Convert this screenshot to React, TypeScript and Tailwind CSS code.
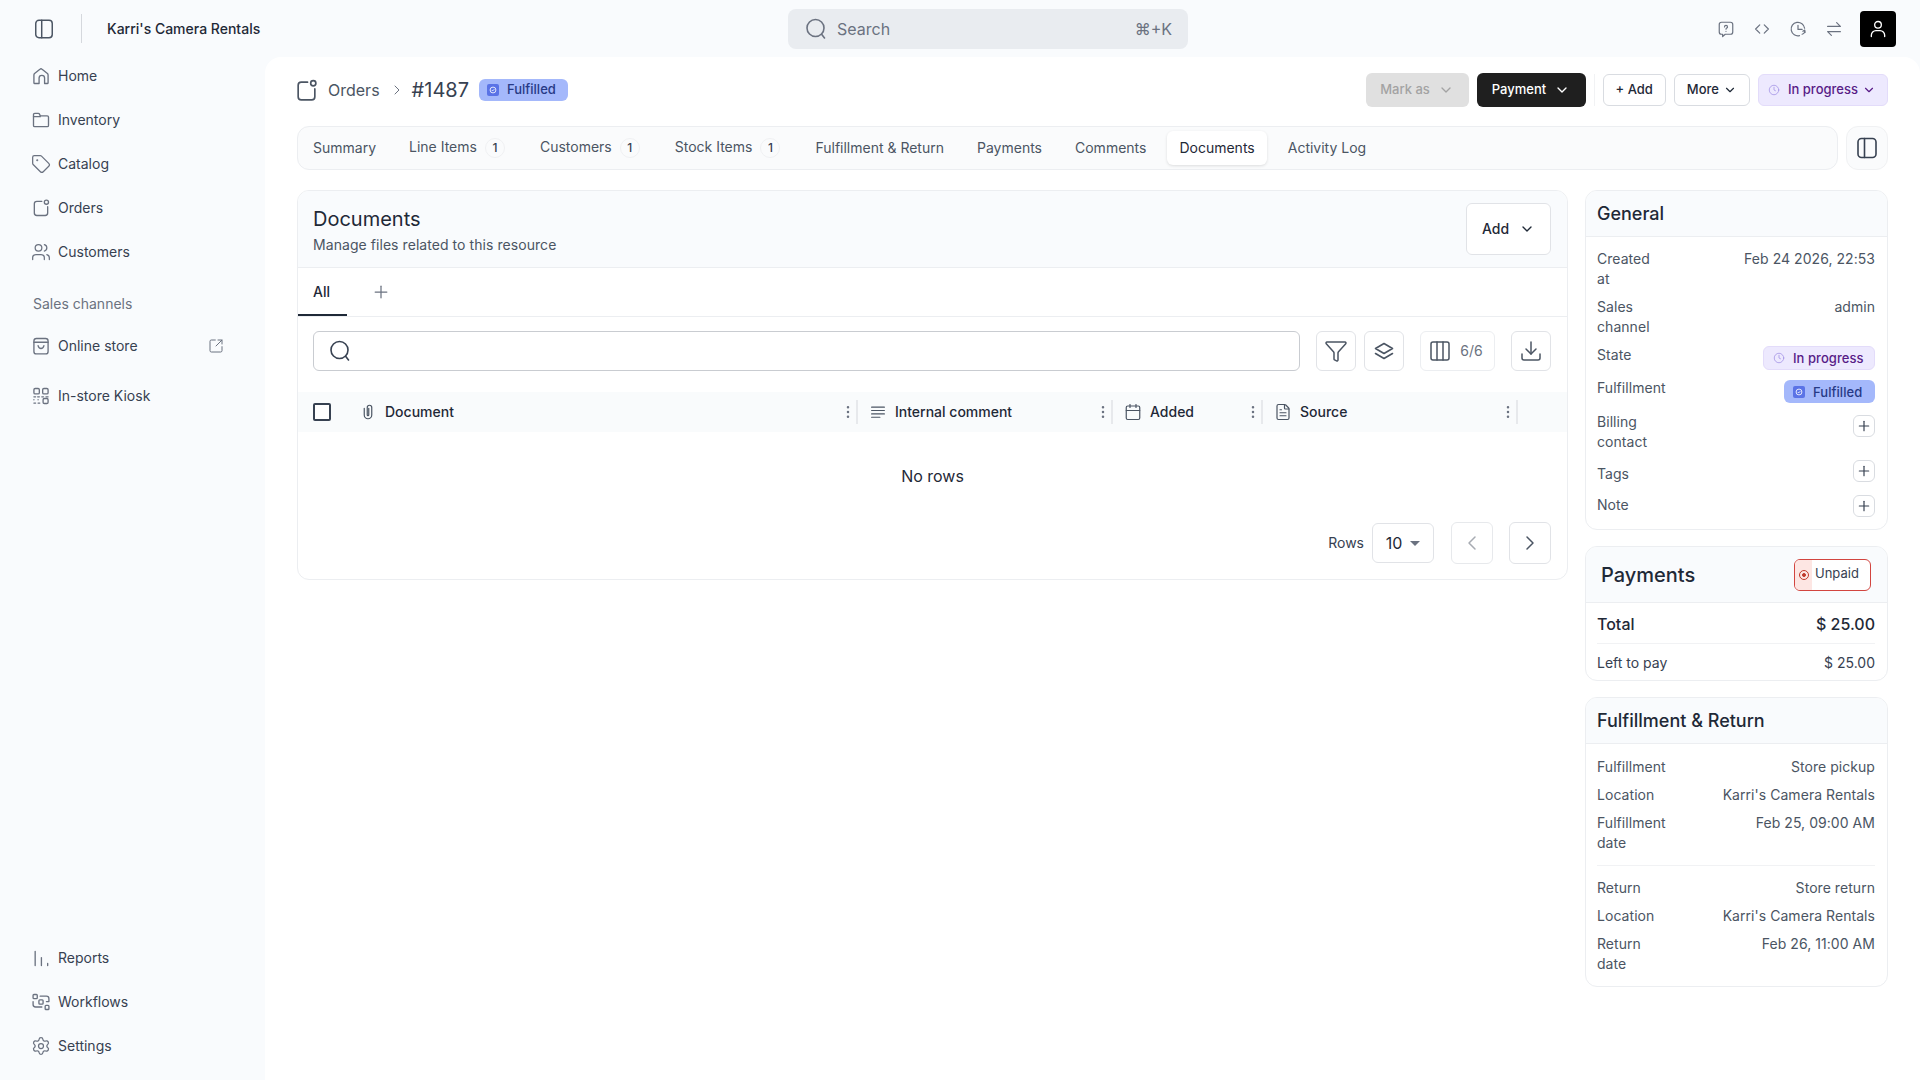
import type { ReactNode } from "react";
import {
  Calendar,
  ChevronDown,
  ChevronLeft,
  ChevronRight,
  Columns3,
  Download,
  EllipsisVertical,
  FileText,
  Funnel,
  Plus,
  Settings,
  SquareArrowOutUpRight,
  Tag,
  Users,
} from "lucide-react";

type IconProps = { className?: string };

function Svg({ className, children }: IconProps & { children: ReactNode }) {
  return (
    <svg
      viewBox="0 0 24 24"
      fill="none"
      stroke="currentColor"
      strokeWidth="1.6"
      strokeLinecap="round"
      strokeLinejoin="round"
      className={className}
    >
      {children}
    </svg>
  );
}

const PanelIcon = ({ className }: IconProps) => (
  <Svg className={className}>
    <rect x="3" y="2.5" width="18" height="19" rx="3.5" />
    <path d="M9.5 2.5v19" />
  </Svg>
);
const SearchIcon = ({ className }: IconProps) => (
  <Svg className={className}>
    <circle cx="11.5" cy="11" r="8.5" />
    <path d="M17.8 17.5 20.5 21" />
  </Svg>
);
const HomeIcon = ({ className }: IconProps) => (
  <Svg className={className}>
    <path d="M3.5 20v-9.2c0-.7.3-1.3.8-1.7l6.4-5.2a2 2 0 0 1 2.6 0l6.4 5.2c.5.4.8 1 .8 1.7V20a1 1 0 0 1-1 1h-3.2v-6.5a3.300 3.300 0 0 0-6.600 0V21H4.500a1 1 0 0 1-1-1z" />
  </Svg>
);
const FolderIcon = ({ className }: IconProps) => (
  <Svg className={className}>
    <path d="M3 8V5.500A1.500 1.500 0 0 1 4.500 4h4.300c.5 0 1 .3 1.200.7L11.200 7H19.500A1.500 1.500 0 0 1 21 8.500v10a1.500 1.500 0 0 1-1.500 1.500h-15A1.500 1.500 0 0 1 3 18.500z" />
    <path d="M3 8h8.200" />
  </Svg>
);
const OrdersIcon = ({ className }: IconProps) => (
  <Svg className={className}>
    <path d="M13 4H7a3 3 0 0 0-3 3v11a3 3 0 0 0 3 3h10a3 3 0 0 0 3-3v-7.500" />
    <circle cx="18.500" cy="5" r="2.500" />
  </Svg>
);
const BagIcon = ({ className }: IconProps) => (
  <Svg className={className}>
    <rect x="3.500" y="3" width="17" height="18.500" rx="3" />
    <path d="M3.500 7.500h17" />
    <path d="M8.500 11.500c.5 2.300 1.800 3.500 3.500 3.500s3-1.200 3.500-3.500" />
  </Svg>
);
const KioskIcon = ({ className }: IconProps) => (
  <Svg className={className}>
    <rect x="3.500" y="3" width="6.500" height="6.500" rx="1.500" />
    <rect x="14" y="3" width="6.500" height="6.500" rx="1.500" />
    <rect x="14.500" y="15" width="6" height="6" rx="1.500" />
    <path d="M3.500 13h2M8 13h2M13 13h2M18 13h2.500M3.500 16.500v0M3.500 20.500h2M8.500 16.500v0M8.500 20.500h2" />
  </Svg>
);
const ReportsIcon = ({ className }: IconProps) => (
  <Svg className={className}>
    <path d="M5 4v17M12.500 11.500V21M20 18.500V21" />
  </Svg>
);
const WorkflowsIcon = ({ className }: IconProps) => (
  <Svg className={className}>
    <rect x="2.500" y="3" width="5" height="5" rx="1" />
    <rect x="9.500" y="9.500" width="5" height="5" rx="1" />
    <rect x="17" y="16" width="4.500" height="5" rx="1" />
    <path d="M11 5h7.500a3 3 0 0 1 3 3v3.500h-3M2.500 11.500v3.500a3 3 0 0 0 3 3H13" />
  </Svg>
);
const HelpIcon = ({ className }: IconProps) => (
  <Svg className={className}>
    <path d="M6 3h12a3 3 0 0 1 3 3v10a3 3 0 0 1-3 3h-7l-3.500 3v-3H6a3 3 0 0 1-3-3V6a3 3 0 0 1 3-3z" />
    <path d="M10 9.200c0-1.100.9-1.900 2-1.900s2 .8 2 1.900c0 1.700-2 1.500-2 3.100M12 15.100v0" />
  </Svg>
);
const CodeIcon = ({ className }: IconProps) => (
  <Svg className={className}>
    <path d="M9 6.500 3.500 12 9 17.500M15 6.500l5.500 5.500-5.500 5.500" />
  </Svg>
);
const HistoryIcon = ({ className }: IconProps) => (
  <Svg className={className}>
    <path d="M20.800 11A9 9 0 1 0 14 20.800" />
    <path d="M12 7v5.500h5.500M21 13.500a5 5 0 0 1-3.500 5.500M21.500 16.500 21 13.500 18.500 15" />
  </Svg>
);
const SwapIcon = ({ className }: IconProps) => (
  <Svg className={className}>
    <path d="M3.500 8.500h17L15.500 3.500M20.500 15.500h-17l5 5" />
  </Svg>
);
const UserIcon = ({ className }: IconProps) => (
  <Svg className={className}>
    <circle cx="12" cy="7" r="4" />
    <path d="M4 21v-1.500A5.500 5.500 0 0 1 9.500 14h5a5.500 5.500 0 0 1 5.500 5.500V21" />
  </Svg>
);
const ClockIcon = ({ className }: IconProps) => (
  <Svg className={className}>
    <circle cx="12" cy="12" r="9.500" />
    <path d="M12 6.500V12l3 1.500" />
  </Svg>
);
const LayersIcon = ({ className }: IconProps) => (
  <Svg className={className}>
    <path d="M12 4.500 20.500 9.500 12 14.500 3.500 9.500z" />
    <path d="M3.500 14.500 12 19.500l8.500-5" />
  </Svg>
);
const ClipIcon = ({ className }: IconProps) => (
  <Svg className={className}>
    <path d="M7 7v9a5 5 0 0 0 10 0V6a3 3 0 0 0-6 0v10a1 1 0 0 0 2 0V7" />
  </Svg>
);
const CommentLinesIcon = ({ className }: IconProps) => (
  <Svg className={className}>
    <path d="M3.500 5.500h17M3.500 10h17M3.500 14.500h17M3.500 19h11" />
  </Svg>
);

function FulfilledBadge({ className }: IconProps) {
  return (
    <span className={`flex items-center gap-2 rounded-md bg-[#a4b8fb] text-[13px] font-medium text-[#273a86] ${className ?? ""}`}>
      <span className="flex h-3 w-3 items-center justify-center rounded-[2px] bg-[#5a73e6]">
        <svg viewBox="0 0 12 12" fill="none" stroke="#fff" strokeWidth="1" className="h-2.5 w-2.5">
          <circle cx="6" cy="6" r="3.500" />
          <path d="M4.500 6l1.100 1.100L7.600 5" />
        </svg>
      </span>
      Fulfilled
    </span>
  );
}

function InProgressIcon() {
  return <ClockIcon className="h-3 w-3 shrink-0 text-[#a594e6]" />;
}

function NavItem({ icon, label, right }: { icon: ReactNode; label: string; right?: ReactNode }) {
  return (
    <div className="flex h-11 items-center pl-[33px] pr-[41px] text-sm text-[#374151]">
      <span className="flex w-[25px] shrink-0 text-[#6b7280]">{icon}</span>
      <span>{label}</span>
      {right && <span className="ml-auto text-[#6b7280]">{right}</span>}
    </div>
  );
}

function Sidebar() {
  const icon = "-ml-0.5 h-5 w-5";
  return (
    <aside className="-mt-[3px] flex w-[265px] shrink-0 flex-col">
      <NavItem icon={<HomeIcon className={icon} />} label="Home" />
      <NavItem icon={<FolderIcon className={icon} />} label="Inventory" />
      <NavItem icon={<Tag className={icon} strokeWidth={1.5} />} label="Catalog" />
      <NavItem icon={<OrdersIcon className={icon} />} label="Orders" />
      <NavItem icon={<Users className={icon} strokeWidth={1.5} />} label="Customers" />
      <div className="mt-[20px] pl-[33px] text-sm leading-5 text-[#6b7280]">Sales channels</div>
      <div className="mt-[10px]">
        <NavItem
          icon={<BagIcon className={icon} />}
          label="Online store"
          right={<SquareArrowOutUpRight className="h-4 w-4" strokeWidth={1.5} />}
        />
      </div>
      <div className="mt-[6px]">
        <NavItem icon={<KioskIcon className={icon} />} label="In-store Kiosk" />
      </div>
      <div className="mt-auto pb-3">
        <NavItem icon={<ReportsIcon className={icon} />} label="Reports" />
        <NavItem icon={<WorkflowsIcon className={icon} />} label="Workflows" />
        <NavItem icon={<Settings className={icon} strokeWidth={1.5} />} label="Settings" />
      </div>
    </aside>
  );
}

function TopBar() {
  return (
    <header className="flex h-[57px] shrink-0 items-center">
      <div className="flex w-[788px] shrink-0 items-center">
        <PanelIcon className="ml-[33px] h-6 w-[22px] text-[#4b5563]" />
        <span className="ml-[26px] h-[29px] w-px bg-[#d5d8dd]" />
        <span className="ml-[25px] text-sm font-medium text-[#1f2937]">Karri's Camera Rentals</span>
      </div>
      <div className="flex h-10 w-[400px] items-center rounded-lg bg-[#e9ecf0] pl-4 pr-4 text-[#6b7280]">
        <SearchIcon className="h-6 w-6 shrink-0" />
        <span className="ml-[9px] text-base">Search</span>
        <span className="ml-auto text-base">⌘+K</span>
      </div>
      <div className="ml-auto flex items-center pr-6 text-[#6b7280]">
        <HelpIcon className="h-[18px] w-[18px]" />
        <CodeIcon className="ml-[18px] h-[18px] w-[18px]" />
        <HistoryIcon className="ml-[18px] h-[18px] w-[18px]" />
        <SwapIcon className="ml-[18px] h-[18px] w-[18px]" />
        <span className="ml-[17px] flex h-9 w-9 items-center justify-center rounded bg-black text-white">
          <UserIcon className="h-5 w-5" />
        </span>
      </div>
    </header>
  );
}

function OutlineButton({ children }: { children: ReactNode }) {
  return (
    <button className="flex h-8 items-center gap-1 rounded-md border border-[#d9dce1] bg-white px-[12px] text-[13px] font-medium text-[#1f2937]">
      {children}
    </button>
  );
}

function PageHeader() {
  return (
    <div className="mb-[3px] flex h-[66px] items-center">
      <OrdersIcon className="-ml-[3px] h-[25px] w-[25px] shrink-0 text-[#4b5563]" />
      <span className="ml-[9px] text-base text-[#4b5563]">Orders</span>
      <ChevronRight className="ml-[9px] h-4 w-4 text-[#6b7280]" strokeWidth={1.5} />
      <span className="ml-[7px] text-xl text-[#374151]">#1487</span>
      <FulfilledBadge className="ml-2.5 h-[22px] w-[89px] pl-2" />
      <div className="ml-auto flex items-center">
        <button className="flex h-[34px] w-[103px] items-center justify-center gap-2 rounded-md bg-[#e0e0e0] text-[13px] font-medium text-[#a3a3a3]">
          Mark as
          <ChevronDown className="h-4 w-4" />
        </button>
        <button className="ml-2 flex h-[34px] w-[109px] items-center justify-center gap-2 rounded-md bg-[#1f1f1f] text-[13px] font-medium text-white">
          Payment
          <ChevronDown className="h-4 w-4" />
        </button>
        <span className="ml-2 mr-2 h-8 w-px bg-[#f1f2f4]" />
        <OutlineButton>+ Add</OutlineButton>
        <span className="w-2" />
        <OutlineButton>
          More
          <ChevronDown className="h-3.5 w-3.5" />
        </OutlineButton>
        <span className="w-2" />
        <button className="flex h-8 w-[130px] items-center gap-2 rounded-md border border-[#e3dcfa] bg-[#ede9fe] pl-[9px] text-[13px] font-medium text-[#581c87]">
          <InProgressIcon />
          In progress
          <ChevronDown className="-ml-1 h-3.5 w-3.5" />
        </button>
      </div>
    </div>
  );
}

function TabItem({ label, count, active }: { label: string; count?: number; active?: boolean }) {
  return (
    <div
      className={`flex h-[34px] items-center rounded-md pl-3 text-sm ${count ? "pr-[14px]" : "pr-3"} ${
        active ? "bg-white text-[#1f2937] shadow-[0_1px_3px_rgba(0,0,0,0.12)]" : "text-[#4b5563]"
      }`}
    >
      <span className={count ? "-mt-0.5" : ""}>{label}</span>
      {count && (
        <span className="ml-2 flex h-5 w-5 items-center justify-center rounded-full border border-[#f0f1f3] bg-[#fafbfc] text-xs font-medium text-[#374151]">
          {count}
        </span>
      )}
    </div>
  );
}

function TabsBar() {
  return (
    <div className="mb-5 flex h-11 gap-2">
      <div className="flex flex-1 items-center gap-[9px] rounded-xl border border-[#eceef1] bg-[#fafbfc] pl-[3px]">
        <TabItem label="Summary" />
        <TabItem label="Line Items" count={1} />
        <TabItem label="Customers" count={1} />
        <TabItem label="Stock Items" count={1} />
        <TabItem label="Fulfillment & Return" />
        <TabItem label="Payments" />
        <TabItem label="Comments" />
        <TabItem label="Documents" active />
        <TabItem label="Activity Log" />
      </div>
      <div className="flex w-[42px] items-center justify-center rounded-xl border border-[#f0f1f3] bg-[#fafbfc] text-[#374151]">
        <PanelIcon className="h-6 w-6" />
      </div>
    </div>
  );
}

function ToolButton({ children, className }: { children: ReactNode; className?: string }) {
  return (
    <button className={`flex h-10 items-center justify-center rounded-md border border-[#e1e3e7] bg-white text-[#4b5563] ${className ?? ""}`}>
      {children}
    </button>
  );
}

function ColumnHeader({ icon, label, width }: { icon: ReactNode; label: string; width: string }) {
  return (
    <div className={`flex h-6 items-center ${width}`}>
      <span className="flex w-[25px] shrink-0 text-[#4b5563]">{icon}</span>
      <span className="text-sm font-medium text-[#1f2937]">{label}</span>
      <EllipsisVertical className="ml-auto h-4 w-4 text-[#6b7280]" strokeWidth={1.8} />
      <span className="h-6 w-0.5 bg-[#e7e9ec]" />
    </div>
  );
}

function DocumentsCard() {
  const columnIcon = "-ml-px h-[18px] w-[18px]";
  return (
    <section className="w-[1271px] shrink-0 self-start overflow-hidden rounded-xl border border-[#eceef1] bg-white">
      <div className="flex h-[77px] items-center justify-between border-b border-[#eceef1] bg-[#f9fbfd] pl-[15px] pr-4">
        <div className="pt-0.5">
          <h2 className="text-xl leading-7 text-[#1f2937]">Documents</h2>
          <p className="mt-0.5 text-sm leading-5 tracking-[0.06px] text-[#4b5563]">Manage files related to this resource</p>
        </div>
        <button className="flex h-[52px] w-[85px] items-center justify-center gap-2.5 rounded-md border border-[#e1e3e7] bg-white text-sm font-medium text-[#1f2937]">
          Add
          <ChevronDown className="h-4 w-4" />
        </button>
      </div>

      <div className="flex h-[49px] items-center border-b border-[#eceef1]">
        <div className="flex h-full w-[49px] items-center border-b-2 border-[#1f2937] pl-[15px] pt-0.5 text-sm font-medium text-[#1f2937]">
          All
        </div>
        <Plus className="ml-[24px] h-5 w-5 text-[#6b7280]" strokeWidth={1.5} />
      </div>

      <div className="flex items-center pl-[15px] pt-[14px]">
        <div className="flex h-10 w-[987px] items-center rounded-md border border-[#c9ccd1] pl-[14px] text-[#374151]">
          <SearchIcon className="h-6 w-6" />
        </div>
        <ToolButton className="ml-4 w-10">
          <Funnel className="h-6 w-6" strokeWidth={1.5} />
        </ToolButton>
        <ToolButton className="ml-2 w-10">
          <LayersIcon className="h-6 w-6" />
        </ToolButton>
        <ToolButton className="ml-4 w-[75px] gap-2 border-[#eceef1] pr-1">
          <Columns3 className="h-6 w-6" strokeWidth={1.5} />
          <span className="text-sm text-[#6b7280]">6/6</span>
        </ToolButton>
        <ToolButton className="ml-4 w-10">
          <Download className="h-6 w-6" strokeWidth={1.5} />
        </ToolButton>
      </div>

      <div className="mt-[21px] flex h-10 items-center bg-[#f9fbfc]">
        <div className="w-[59px] shrink-0 pl-[15px]">
          <span className="block h-[18px] w-[18px] rounded-[2px] border-2 border-[#374151] bg-white" />
        </div>
        <ColumnHeader width="w-[501px] pl-[3px]" label="Document" icon={<ClipIcon className={columnIcon} />} />
        <div className="pl-3">
          <ColumnHeader width="w-[243px]" label="Internal comment" icon={<CommentLinesIcon className={columnIcon} />} />
        </div>
        <div className="pl-3">
          <ColumnHeader width="w-[138px]" label="Added" icon={<Calendar className={columnIcon} strokeWidth={1.6} />} />
        </div>
        <div className="pl-3">
          <ColumnHeader width="w-[243px]" label="Source" icon={<FileText className={columnIcon} strokeWidth={1.6} />} />
        </div>
      </div>

      <div className="mt-[34px] text-center text-base leading-5 text-[#1f2937]">No rows</div>

      <div className="mb-[15px] mt-[36px] flex h-[42px] items-center justify-end pr-4">
        <span className="text-sm text-[#374151]">Rows</span>
        <div className="ml-2 flex h-10 w-[62px] items-center justify-center gap-2 rounded-md border border-[#e1e3e7] text-base text-[#1f2937]">
          10
          <span className="h-0 w-0 border-x-[5px] border-t-[5px] border-x-transparent border-t-[#6b7280]" />
        </div>
        <button className="ml-[17px] flex h-[42px] w-[42px] items-center justify-center rounded-md border border-[#e7e9ec] text-[#a7abb2]">
          <ChevronLeft className="h-6 w-6" strokeWidth={1.5} />
        </button>
        <button className="ml-4 flex h-[42px] w-[42px] items-center justify-center rounded-md border border-[#e1e3e7] text-[#4b5563]">
          <ChevronRight className="h-6 w-6" strokeWidth={1.5} />
        </button>
      </div>
    </section>
  );
}

function Row({ label, children, className, textClass }: { label: string; children?: ReactNode; className?: string; textClass?: string }) {
  return (
    <div className={`flex justify-between text-sm leading-5 tracking-[0.05px] text-[#4b5563] ${className ?? ""}`}>
      <span className={`w-[68px] shrink-0 ${textClass ?? ""}`}>{label}</span>
      <div className="flex justify-end text-right">{children}</div>
    </div>
  );
}

function PlusButton({ className }: IconProps) {
  return (
    <button className={`flex h-[22px] w-[22px] items-center justify-center rounded-md border border-[#d9dce1] bg-white text-[#374151] ${className ?? ""}`}>
      <Plus className="h-4 w-4" strokeWidth={1.8} />
    </button>
  );
}

function SideCard({ children }: { children: ReactNode }) {
  return <section className="overflow-hidden rounded-xl border border-[#eceef1] bg-white">{children}</section>;
}

function GeneralCard() {
  return (
    <SideCard>
      <div className="flex h-[46px] items-center border-b border-[#eceef1] bg-[#f9fbfd] pl-[11px] text-lg font-medium text-[#1f2937]">General</div>
      <div className="flex flex-col gap-2 pb-3 pl-[11px] pr-3 pt-3">
        <Row label="Created at">Feb 24 2026, 22:53</Row>
        <Row label="Sales channel">admin</Row>
        <Row label="State">
          <span className="mt-px flex h-6 w-28 items-center gap-2 rounded-md border border-[#e3dcfa] bg-[#ede9fe] pl-[9px] text-[13px] font-medium text-[#581c87]">
            <InProgressIcon />
            In progress
          </span>
        </Row>
        <Row label="Fulfillment">
          <FulfilledBadge className="mb-px mt-0.5 h-[23px] w-[91px] pl-[9px]" />
        </Row>
        <Row label="Billing contact">
          <PlusButton className="mt-[3px]" />
        </Row>
        <Row label="Tags" textClass="mt-1">
          <PlusButton />
        </Row>
        <Row label="Note" textClass="mt-[3px]">
          <PlusButton className="mt-[3px]" />
        </Row>
      </div>
    </SideCard>
  );
}

function PaymentsCard() {
  return (
    <SideCard>
      <div className="flex h-[56px] items-center justify-between border-b border-[#eceef1] bg-[#f9fbfd] pl-[15px] pr-4">
        <span className="text-xl font-medium text-[#1f2937]">Payments</span>
        <span className="flex h-8 w-[77px] items-center overflow-hidden rounded-md border border-[#d2453f] bg-white text-[13px] text-[#374151]">
          <span className="flex h-full w-[17px] items-center justify-center bg-[#fde6e3] text-[#c0392b]">
            <svg viewBox="0 0 12 12" fill="none" stroke="currentColor" strokeWidth="1" className="h-3 w-3">
              <circle cx="6" cy="6" r="4.500" />
              <circle cx="6" cy="6" r="1.500" fill="currentColor" />
            </svg>
          </span>
          <span className="-mt-0.5 ml-[3px]">Unpaid</span>
        </span>
      </div>
      <div className="pl-[11px] pr-3">
        <div className="flex h-[41px] items-center justify-between border-b border-[#f1f2f4] pt-0.5 text-base font-medium text-[#1f2937]">
          <span>Total</span>
          <span>$ 25.00</span>
        </div>
        <div className="flex h-9 items-center justify-between pt-0.5 text-sm text-[#374151]">
          <span>Left to pay</span>
          <span>$ 25.00</span>
        </div>
      </div>
    </SideCard>
  );
}

function FulfillmentCard() {
  return (
    <SideCard>
      <div className="flex h-[46px] items-center border-b border-[#eceef1] bg-[#f9fbfd] pl-[11px] text-lg font-medium text-[#1f2937]">
        Fulfillment & Return
      </div>
      <div className="pb-3 pl-[11px] pr-3 pt-[13px]">
        <div className="flex flex-col gap-2">
          <Row label="Fulfillment">Store pickup</Row>
          <Row label="Location">
            <span className="whitespace-nowrap">Karri's Camera Rentals</span>
          </Row>
          <Row label="Fulfillment date">Feb 25, 09:00 AM</Row>
        </div>
        <div className="my-3 border-t border-[#f1f2f4]" />
        <div className="flex flex-col gap-2">
          <Row label="Return">Store return</Row>
          <Row label="Location">
            <span className="whitespace-nowrap">Karri's Camera Rentals</span>
          </Row>
          <Row label="Return date">Feb 26, 11:00 AM</Row>
        </div>
      </div>
    </SideCard>
  );
}

export default function App() {
  return (
    <div className="flex h-screen flex-col overflow-hidden bg-[#f9fbfd] font-['Inter',sans-serif]">
      <TopBar />
      <div className="flex min-h-0 flex-1">
        <Sidebar />
        <main className="flex-1 rounded-t-2xl bg-white pl-8 pr-8">
          <PageHeader />
          <TabsBar />
          <div className="flex gap-[17px]">
            <DocumentsCard />
            <div className="flex flex-1 flex-col gap-4">
              <GeneralCard />
              <PaymentsCard />
              <FulfillmentCard />
            </div>
          </div>
        </main>
      </div>
    </div>
  );
}
